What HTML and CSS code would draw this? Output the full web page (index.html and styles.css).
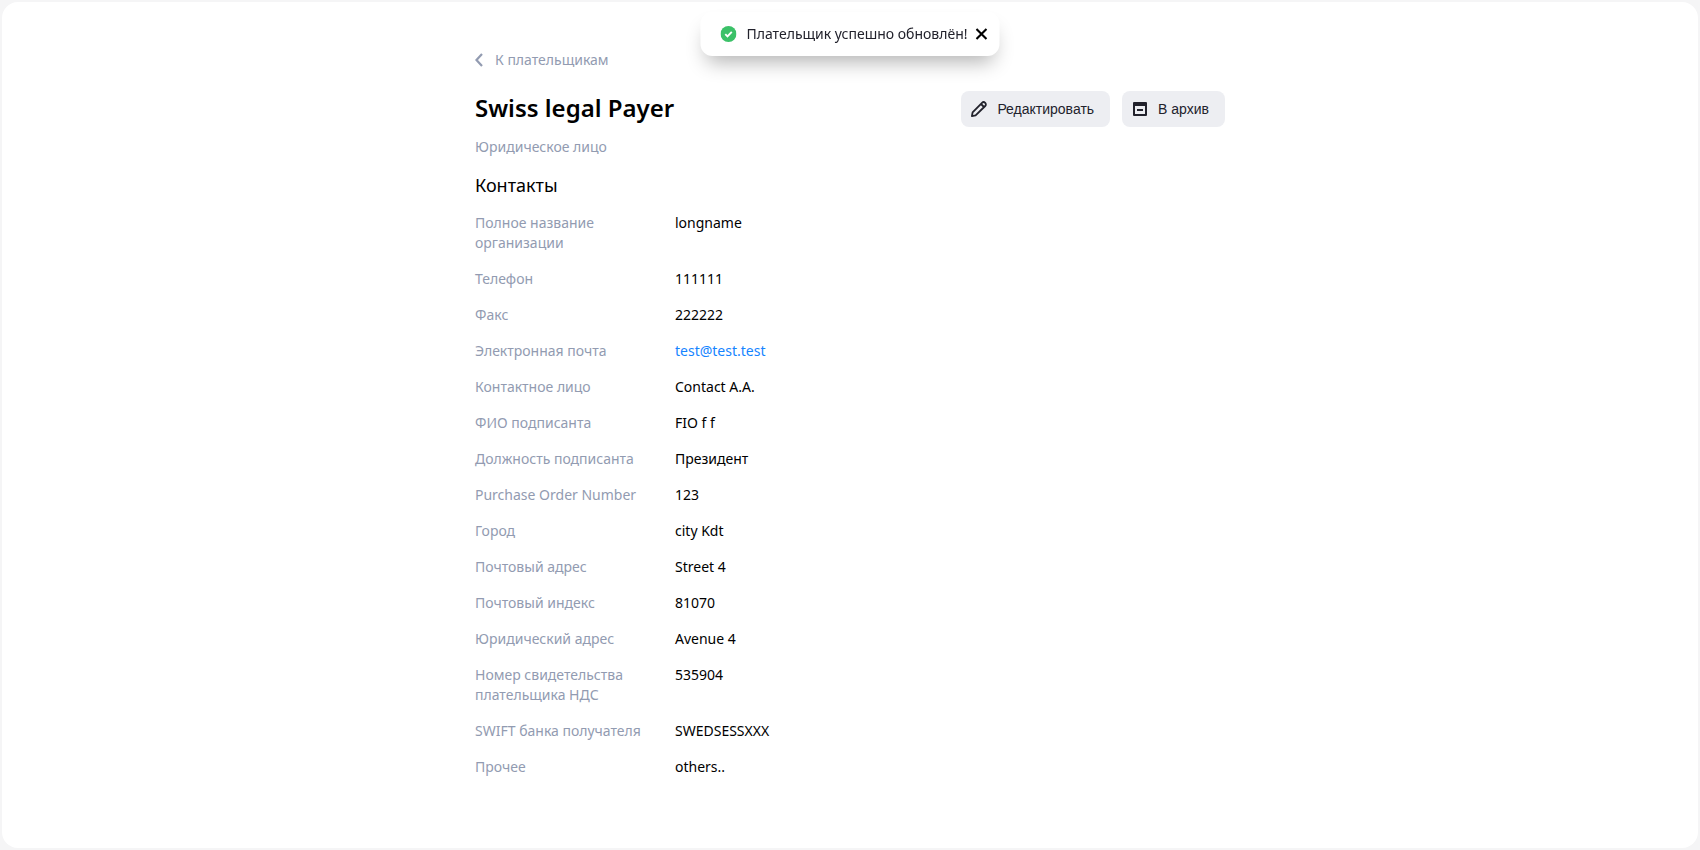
FILE: index.html
```html
<!DOCTYPE html>
<html lang="ru">
<head>
<meta charset="utf-8">
<meta name="viewport" content="width=device-width, initial-scale=1">
<title>Swiss legal Payer</title>
<link rel="stylesheet" href="styles.css">
</head>
<body>
<main class="panel">
  <div class="content">
    <a class="back" href="#">
      <svg class="back-icon" viewBox="0 0 8 14" aria-hidden="true"><path d="M7 1 1.5 7 7 13" fill="none" stroke="currentColor" stroke-width="2.2"/></svg>
      К плательщикам
    </a>
    <header class="header">
      <h1 class="title">Swiss legal Payer</h1>
      <div class="actions">
        <button class="button" type="button">
          <svg class="button-icon" viewBox="0 0 16 16" aria-hidden="true"><path d="M.9 15.1 1.6 11.4 11 1.8a2.2 2.2 0 0 1 3.2 3.2L4.6 14.4ZM10 3l3 3" fill="none" stroke="currentColor" stroke-width="1.8" stroke-linejoin="round"/></svg>
          Редактировать
        </button>
        <button class="button" type="button">
          <svg class="button-icon" viewBox="0 0 16 16" aria-hidden="true"><path d="M2 1h12a1 1 0 0 1 1 1v12a1 1 0 0 1-1 1H2a1 1 0 0 1-1-1V2a1 1 0 0 1 1-1Zm1 4v8h10V5ZM5 8h6v2H5Z" fill="currentColor" fill-rule="evenodd"/></svg>
          В архив
        </button>
      </div>
    </header>
    <p class="kind">Юридическое лицо</p>
    <h2 class="subtitle">Контакты</h2>
    <dl class="details">
      <dt>Полное название организации</dt><dd>longname</dd>
      <dt>Телефон</dt><dd>111111</dd>
      <dt>Факс</dt><dd>222222</dd>
      <dt>Электронная почта</dt><dd><a class="mail" href="mailto:test@test.test">test@test.test</a></dd>
      <dt>Контактное лицо</dt><dd>Contact A.A.</dd>
      <dt>ФИО подписанта</dt><dd>FIO f f</dd>
      <dt>Должность подписанта</dt><dd>Президент</dd>
      <dt>Purchase Order Number</dt><dd>123</dd>
      <dt>Город</dt><dd>city Kdt</dd>
      <dt>Почтовый адрес</dt><dd>Street 4</dd>
      <dt>Почтовый индекс</dt><dd>81070</dd>
      <dt>Юридический адрес</dt><dd>Avenue 4</dd>
      <dt>Номер свидетельства плательщика НДС</dt><dd>535904</dd>
      <dt>SWIFT банка получателя</dt><dd>SWEDSESSXXX</dd>
      <dt>Прочее</dt><dd>others..</dd>
    </dl>
  </div>
</main>
<div class="toast" role="status">
  <svg class="toast-icon" viewBox="0 0 16 16" aria-hidden="true"><circle cx="8" cy="8" r="8" fill="#3bc168"/><path d="M4.8 8.2 7 10.4l4.3-4.6" fill="none" stroke="#fff" stroke-width="1.9"/></svg>
  <span>Плательщик успешно обновлён!</span>
  <button class="toast-close" type="button" aria-label="Закрыть">
    <svg class="toast-cross" viewBox="0 0 12 12" aria-hidden="true"><path d="m1 1 10 10M11 1 1 11" stroke="currentColor" stroke-width="2.1"/></svg>
  </button>
</div>
</body>
</html>
```
FILE: styles.css
```css
* {
  box-sizing: border-box;
}

body {
  margin: 0;
  padding: 2px;
  min-height: 100vh;
  display: flex;
  background: #f5f5f6;
  color: #000;
  font: 14px/20px "Noto Sans", sans-serif;
}

.panel {
  flex: 1;
  padding: 48px 24px;
  border-radius: 16px;
  background: #fff;
}

.content {
  max-width: 750px;
  margin: 0 auto;
}

.back {
  display: flex;
  width: fit-content;
  align-items: center;
  gap: 12px;
  color: #929bb1;
  text-decoration: none;
}

.back-icon {
  width: 8px;
  height: 14px;
}

.header {
  display: flex;
  align-items: center;
  justify-content: space-between;
  margin-top: 21px;
}

.title {
  margin: 0;
  padding-bottom: 2px;
  font-size: 24px;
  line-height: 32px;
  font-weight: 600;
}

.actions {
  display: flex;
  gap: 12px;
}

.button {
  display: flex;
  align-items: center;
  gap: 10px;
  height: 36px;
  padding: 0 16px 0 10px;
  border: 0;
  border-radius: 8px;
  background: #edeef2;
  color: #22222c;
  font: 14px/20px "Liberation Sans", sans-serif;
}

.button-icon {
  width: 16px;
  height: 16px;
}

.kind {
  margin: 10px 0 0;
  color: #929bb1;
}

.subtitle {
  margin: 16px 0 0;
  font-size: 18px;
  line-height: 24px;
  font-weight: 400;
}

.details {
  display: grid;
  grid-template-columns: 168px 1fr;
  gap: 16px 32px;
  margin: 16px 0 0;
}

.details dt {
  color: #929bb1;
}

.details dd {
  margin: 0;
}

.mail {
  color: #1584ff;
  text-decoration: none;
}

.toast {
  position: fixed;
  top: 12px;
  left: 50%;
  transform: translateX(-50%);
  display: flex;
  align-items: center;
  height: 44px;
  padding: 0 12px 0 20px;
  border-radius: 12px;
  background: #fff;
  color: #22222c;
  white-space: nowrap;
  box-shadow: 0 12px 20px -6px rgba(0, 0, 0, 0.3);
}

.toast-icon {
  width: 16px;
  height: 16px;
  margin-right: 10px;
}

.toast-close {
  display: flex;
  margin-left: 8px;
  padding: 0;
  border: 0;
  background: none;
  color: #000;
}

.toast-cross {
  width: 12px;
  height: 12px;
}
```
